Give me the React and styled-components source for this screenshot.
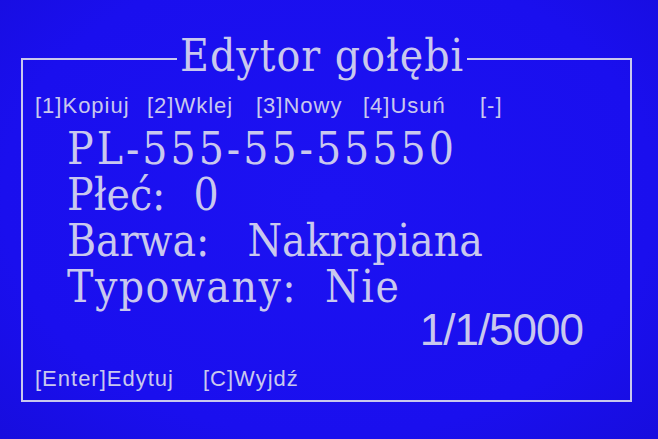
import React from "react";
import styled, { createGlobalStyle } from "styled-components";

const GlobalStyle = createGlobalStyle`
  html, body {
    margin: 0;
    padding: 0;
    background: #1a10ee;
  }
`;

const LCD = "#c9c8ee";
const SERIF = `"DejaVu Serif Condensed", "DejaVu Serif", "Liberation Serif", serif`;
const SANS = `"Liberation Sans", Arial, sans-serif`;

const Screen = styled.div`
  width: 658px;
  height: 439px;
  box-sizing: border-box;
  padding: 34px 0 0 21px;
  background: radial-gradient(ellipse at 50% 45%, #1c12f2 0%, #1a0fee 70%, #170dde 100%);
  overflow: hidden;
`;

const Frame = styled.fieldset`
  width: 611px;
  margin: 0;
  min-width: 0;
  box-sizing: border-box;
  border: 2px solid ${LCD};
  padding: 10px 0 8px 12px;
  color: ${LCD};
`;

const Title = styled.legend`
  margin-left: 142px;
  padding: 0 3px 5px;
  font-family: ${SERIF};
  font-stretch: condensed;
  font-size: 44px;
  line-height: 44px;
  letter-spacing: 1px;
`;

const KeyBar = styled.div`
  display: grid;
  grid-template-columns: ${(p) => p.$cols};
  font-family: ${SANS};
  font-size: 22px;
  line-height: 26px;
  letter-spacing: 1px;
  white-space: pre;
  margin-top: ${(p) => p.$top || 0}px;
`;

const Fields = styled.div`
  margin: 7px 0 0 32px;
  font-family: ${SERIF};
  font-stretch: condensed;
  font-size: 44px;
  line-height: 46px;
  white-space: pre;
`;

const Field = styled.div`
  display: flex;
  letter-spacing: ${(p) => p.$track}px;
`;

const Value = styled.span`
  margin-left: ${(p) => p.$gap}px;
`;

const DateLine = styled.div`
  display: flex;
  justify-content: flex-end;
  padding-right: 47px;
  font-family: ${SANS};
  font-size: 44px;
  line-height: 40px;
  letter-spacing: -1px;
`;

const fields = [
  { label: "PL-555-55-55550", track: 3 },
  { label: "Płeć:", value: "0", gap: 28, track: 0 },
  { label: "Barwa:", value: "Nakrapiana", gap: 38, track: 0 },
  { label: "Typowany:", value: "Nie", gap: 28, track: 1.5 },
];

export default function App() {
  return (
    <>
      <GlobalStyle />
      <Screen>
        <Frame>
          <Title>Edytor gołębi</Title>
          <KeyBar $cols="112px 109px 107px 117px auto">
            <span>[1]Kopiuj</span>
            <span>[2]Wklej</span>
            <span>[3]Nowy</span>
            <span>[4]Usuń</span>
            <span>[-]</span>
          </KeyBar>
          <Fields>
            {fields.map((f) => (
              <Field key={f.label} $track={f.track}>
                <span>{f.label}</span>
                {f.value && <Value $gap={f.gap}>{f.value}</Value>}
              </Field>
            ))}
          </Fields>
          <DateLine>1/1/5000</DateLine>
          <KeyBar $cols="168px auto" $top={16}>
            <span>[Enter]Edytuj</span>
            <span>[C]Wyjdź</span>
          </KeyBar>
        </Frame>
      </Screen>
    </>
  );
}
